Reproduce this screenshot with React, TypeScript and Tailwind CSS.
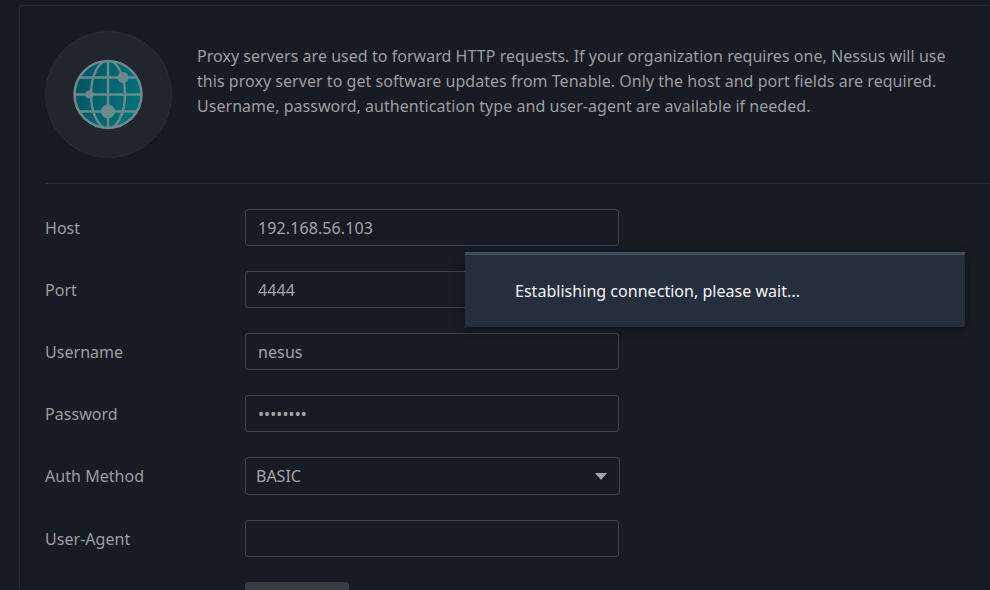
import React from "react";

const font = { fontFamily: '"Noto Sans", sans-serif' };

function Globe() {
  return (
    <svg width="127" height="127" viewBox="0 0 127 127" className="block">
      <defs>
        <linearGradient id="g" x1="0" y1="0" x2="1" y2="0.4">
          <stop offset="0" stopColor="#03525f" />
          <stop offset="1" stopColor="#02727a" />
        </linearGradient>
        <clipPath id="c"><circle cx="63" cy="63.5" r="34" /></clipPath>
      </defs>
      <circle cx="63.5" cy="63.5" r="63" fill="#22252d" stroke="#2a2d35" />
      <circle cx="63" cy="63.5" r="33.5" fill="url(#g)" stroke="#6a8a8e" strokeWidth="2.5" />
      <g clipPath="url(#c)" fill="none" stroke="#6a8a8e" strokeWidth="2.4">
        <path d="M63 29v69" />
        <ellipse cx="63" cy="63.5" rx="17" ry="34" />
        <path d="M29 63.5h68" />
        <path d="M35 46.5h56" />
        <path d="M35 80.5h56" />
      </g>
      <g fill="#6a8a8e">
        <circle cx="78" cy="46.5" r="5.5" />
        <circle cx="44.5" cy="63.5" r="4" />
        <circle cx="63" cy="80.5" r="7" />
      </g>
    </svg>
  );
}

function Row({ label, children }: { label: string; children: React.ReactNode }) {
  return (
    <div className="flex items-center mb-[25px]">
      <div className="w-[200px] text-[16px] tracking-[0.04px] text-[#9c9ea1]">{label}</div>
      {children}
    </div>
  );
}

function Field({ value }: { value?: string }) {
  return (
    <div className="w-[374px] h-[37px] box-border border border-[#3d424e] rounded-[3px] pl-[12px] flex items-center text-[16px] tracking-[0.1px] text-[#a3a5a8]">
      {value}
    </div>
  );
}

export default function App() {
  return (
    <div style={font} className="relative w-[990px] h-[590px] overflow-hidden bg-[#171b23]">
      <div className="ml-[19px] pt-[5px] h-full">
        <div className="h-full border-l border-t border-[#262a33] pl-[25px] pt-[25px]">
          <div className="flex h-[152px] items-start">
            <Globe />
            <p className="ml-[25px] mt-[13px] w-[770px] text-[16px] leading-[25px] tracking-[0.04px] text-[#9c9ea1]">
              Proxy servers are used to forward HTTP requests. If your organization requires one, Nessus will use this proxy server to get software updates from Tenable. Only the host and port fields are required. Username, password, authentication type and user-agent are available if needed.
            </p>
          </div>
          <div className="h-px bg-[#2b2f38] mb-[25px]" />
          <Row label="Host"><Field value="192.168.56.103" /></Row>
          <Row label="Port"><Field value="4444" /></Row>
          <Row label="Username"><Field value="nesus" /></Row>
          <Row label="Password">
            <Field value="••••••••" />
          </Row>
          <Row label="Auth Method">
            <div className="w-[375px] h-[38px] box-border border border-[#3d424e] rounded-[3px] pl-[10px] pr-[12px] flex items-center justify-between text-[16px] text-[#a3a5a8]">
              BASIC
              <svg width="12" height="7" viewBox="0 0 12 7"><path d="M0 0h12L6 7z" fill="#a3a5a8" /></svg>
            </div>
          </Row>
          <Row label="User-Agent"><Field /></Row>
          <div className="ml-[200px] w-[104px] h-[30px] rounded-[3px] bg-[#3a3c41]" />
        </div>
      </div>
      <div className="absolute left-[465px] top-[252px] w-[500px] h-[75px] box-border border-t-[3px] border-[#414d5c] bg-[#252e3d] pl-[50px] pt-[25px] text-[16px] leading-[22px] tracking-[0.03px] text-[#f2f4f6] shadow-[0_2px_10px_rgba(0,0,0,0.35)]">
        Establishing connection, please wait...
      </div>
    </div>
  );
}
